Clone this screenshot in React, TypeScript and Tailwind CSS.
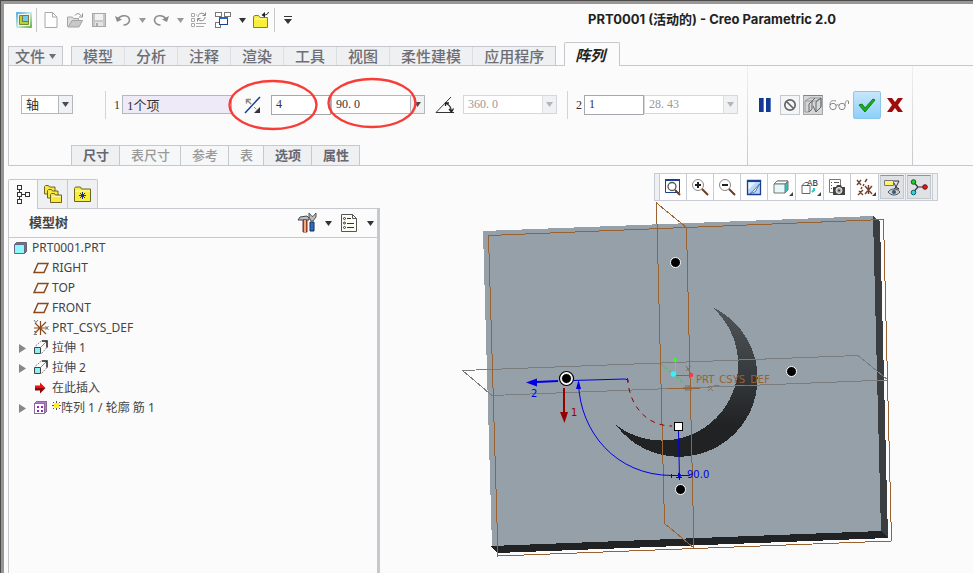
import type { ReactNode } from "react";
import clsx from "clsx";

const line = "border-[#c5c9cd]";

function Caret({ className = "fill-[#333]" }: { className?: string }) {
    return (
        <svg width="7" height="5" viewBox="0 0 7 5" className={className} aria-hidden="true">
            <path d="M0 0h7L3.5 5z" />
        </svg>
    );
}

function Icon({ size = 18, crisp = false, children }: { size?: number; crisp?: boolean; children: ReactNode }) {
    return (
        <svg
            width={size}
            height={size}
            viewBox={`0 0 ${size} ${size}`}
            fill="none"
            shapeRendering={crisp ? "crispEdges" : "auto"}
            className="shrink-0"
            aria-hidden="true"
        >
            {children}
        </svg>
    );
}

/* ---------- quick access bar ---------- */

function QuickButton({ label, small, children }: { label: string; small?: boolean; children: ReactNode }) {
    return (
        <button
            type="button"
            aria-label={label}
            className={clsx("flex h-6 items-center justify-center", small ? "w-3.5" : "w-6")}
        >
            {children}
        </button>
    );
}

function QuickAccess() {
    return (
        <div className="flex h-8 items-center pl-2">
            <QuickButton label="Creo">
                <Icon size={16}>
                    <defs>
                        <linearGradient id="app" x1="0" y1="0" x2="1" y2="1">
                            <stop offset="0" stopColor="#4aa8e8" />
                            <stop offset=".5" stopColor="#cdeadf" />
                            <stop offset="1" stopColor="#58b82c" />
                        </linearGradient>
                    </defs>
                    <rect width="16" height="16" rx="1" fill="url(#app)" />
                    <path d="M2 2h12v12H2z" fill="#f2f4e4" />
                    <path d="M3.500 3.500h9v9h-9z" fill="#b4d430" stroke="#7c8440" />
                    <path d="M6.500 3.500h6v6h-6z" fill="#70d0ec" stroke="#7c7450" />
                </Icon>
            </QuickButton>
            <div className="mr-0.5 h-6 w-px bg-[#c8c8c8]" />
            <QuickButton label="新建">
                <Icon size={16}>
                    <path d="M2 .5h7.500L14 5v10.500H2z" fill="#fff" stroke="#a8a8a8" />
                    <path d="M9.500.5V5H14" stroke="#a8a8a8" />
                </Icon>
            </QuickButton>
            <QuickButton label="打开">
                <Icon size={16}>
                    <path d="M.5 14.500V5h5l1 1.500h5V9" fill="#ddd" stroke="#a4a4a4" />
                    <path d="M1 15l4-6.500h10.500L12 15z" fill="#c8c8c8" stroke="#a4a4a4" />
                    <path d="M8 3.500c2-3 5-2 6 .5M15.500 1.500V5H12" stroke="#8c8c8c" />
                </Icon>
            </QuickButton>
            <QuickButton label="保存">
                <Icon size={16} crisp>
                    <path d="M1.500 1.500h13v13h-13z" fill="#c8c8c8" stroke="#a8a8a8" />
                    <path d="M4 2h8v6H4z" fill="#f2f2f2" />
                    <path d="M4 10h8v4H4z" fill="#e4e4e4" />
                    <path d="M5 11h2v3H5z" fill="#aaa" />
                </Icon>
            </QuickButton>
            <QuickButton label="撤消">
                <Icon size={16}>
                    <path d="M3 7c3-5 11-4 11.500 1 .3 3-3 5-6 5" stroke="#8c8c8c" strokeWidth="1.600" />
                    <path d="M0 4l2 6 5-2.500z" fill="#8c8c8c" />
                </Icon>
            </QuickButton>
            <QuickButton label="撤消列表" small>
                <Caret className="fill-[#999]" />
            </QuickButton>
            <QuickButton label="重做">
                <Icon size={16}>
                    <path d="M13 7C10 2 2 3 1.500 8c-.3 3 3 5 6 5" stroke="#8c8c8c" strokeWidth="1.600" />
                    <path d="M16 4l-2 6-5-2.500z" fill="#8c8c8c" />
                </Icon>
            </QuickButton>
            <QuickButton label="重做列表" small>
                <Caret className="fill-[#999]" />
            </QuickButton>
            <QuickButton label="重新生成">
                <Icon size={16}>
                    <path d="M.5 1.500h3v3h-3zM.5 6.500h3v3h-3zM.5 11.500h3v3h-3zM5 11.500h10M5 14.500h8M5 3h1" stroke="#aaa" />
                    <path d="M7 5c0-4 5-5 7-2M14 5c0 4-5 5-7 2M14.500.5v3h-3M6.500 9.500v-3h3" stroke="#888" />
                </Icon>
            </QuickButton>
            <QuickButton label="窗口">
                <Icon size={16} crisp>
                    <path d="M.5.5h6v4h-6zM9.500.5h6v4h-6zM.5 10.500h5v5h-5z" fill="#fff" stroke="#777" />
                    <path d="M4.500 5.500h8v7h-8z" fill="#fff" stroke="#1a3f94" />
                    <path d="M4 5h9v2H4z" fill="#2a62cc" />
                </Icon>
            </QuickButton>
            <QuickButton label="窗口列表" small>
                <Caret />
            </QuickButton>
            <QuickButton label="关闭">
                <Icon size={16}>
                    <path d="M.5 15.500V5l1-1.500h4L7 5.500h7.500v10z" fill="#f8ee3c" stroke="#8c8020" />
                    <path d="M1.500 7h12" stroke="#fffbb4" />
                    <path d="M15.500 0c-.5 2-2 3-5 3" stroke="#222" />
                    <path d="M12 0v5.500L8.500 3z" fill="#222" />
                </Icon>
            </QuickButton>
            <div className="mr-px ml-px h-6 w-px bg-[#c8c8c8]" />
            <QuickButton label="自定义">
                <Icon size={10}>
                    <path d="M1 1.500h8" stroke="#333" />
                    <path d="M1 4h8L5 9z" fill="#333" />
                </Icon>
            </QuickButton>
            <h1 className="ml-72 font-['Inter','Noto_Sans_CJK_SC',sans-serif] text-[13px] font-bold whitespace-nowrap text-[#222]">
                PRT0001 (活动的) - Creo Parametric 2.0
            </h1>
        </div>
    );
}

/* ---------- ribbon ---------- */

const mainTabs = ["模型", "分析", "注释", "渲染", "工具", "视图", "柔性建模", "应用程序"];

function RibbonTabs() {
    return (
        <div role="tablist" className="ml-1 flex h-[29px] items-end text-[15px] leading-[18px] font-medium text-[#6d6d75]">
            <button
                type="button"
                className={clsx("mr-2 flex h-[19px] items-center gap-1 border border-b-0 bg-[#eef0f2] px-1.5", line)}
            >
                文件
                <Caret className="fill-[#6d6d75]" />
            </button>
            <div className={clsx("flex h-[19px] border-t border-l", line)}>
                {mainTabs.map((tab, i) => (
                    <button
                        key={tab}
                        type="button"
                        role="tab"
                        aria-selected={false}
                        className={clsx(
                            "border-r bg-[#eef0f2] px-[11px]",
                            i === mainTabs.length - 1 ? "border-[#c5c9cd]" : "border-[#dcdfe2]",
                        )}
                    >
                        {tab}
                    </button>
                ))}
            </div>
            <button
                type="button"
                role="tab"
                aria-selected
                className={clsx(
                    "relative -mb-px ml-2 h-6 rounded-t-xs border border-b-0 bg-[#fbfbfb] pr-3.5 pl-2.5 font-bold text-[#222] italic",
                    line,
                )}
            >
                阵列
            </button>
        </div>
    );
}

type ComboProps = { label: string; value: string; className: string; disabled?: boolean; cjk?: boolean };

function Combo({ label, value, className, disabled, cjk }: ComboProps) {
    return (
        <div
            className={clsx(
                "relative h-[19px] border bg-white",
                disabled ? "border-[#d5d8da]" : "border-[#b4b8bc]",
                className,
            )}
        >
            <select
                aria-label={label}
                defaultValue={value}
                disabled={disabled}
                className={clsx(
                    "block h-full w-full appearance-none pl-1 opacity-100 outline-none",
                    cjk
                        ? "text-[13px] leading-[17px] text-[#333]"
                        : "font-['Liberation_Serif','Noto_Sans_CJK_SC',serif] text-xs leading-[17px]",
                    disabled ? "text-[#999]" : "text-[#333]",
                )}
            >
                <option>{value}</option>
            </select>
            <span
                className={clsx(
                    "pointer-events-none absolute inset-y-0 right-0 flex w-3.5 items-center justify-center border-l bg-[#f0f1f3]",
                    disabled ? "border-[#dcdee0]" : "border-[#b4b8bc]",
                )}
            >
                <Caret className={disabled ? "fill-[#b4b4bc]" : "fill-[#4a4a55]"} />
            </span>
        </div>
    );
}

function NumberBox({ id, label, value }: { id?: string; label?: string; value: string }) {
    return (
        <input
            id={id}
            aria-label={label}
            defaultValue={value}
            className="h-5 w-[60px] border border-[#a4a8ac] bg-white px-1 font-['Liberation_Serif',serif] text-xs text-[#333] outline-none"
        />
    );
}

function Ring() {
    return (
        <svg
            width="90"
            height="52"
            viewBox="0 0 90 52"
            fill="none"
            stroke="#f73d38"
            strokeWidth="2.400"
            aria-hidden="true"
        >
            <ellipse cx="45" cy="26" rx="43.500" ry="24" />
        </svg>
    );
}

function PatternControls() {
    return (
        <div className="mb-0.5 flex h-[77px] items-center pr-[9px] pl-3 text-xs text-[#333]">
            <Combo label="阵列类型" value="轴" className="w-[52px]" cjk />
            <div className="mr-2 ml-8 h-7 w-px bg-[#d2d4d6]" />
            <label htmlFor="axis" className="w-2 font-['Liberation_Serif',serif]">
                1
            </label>
            <input
                id="axis"
                defaultValue="1个项"
                className="h-[19px] w-[110px] border border-[#b4b8bc] bg-[#eeeaf8] px-1 font-['Liberation_Serif','Noto_Sans_CJK_SC',serif] text-[13px] text-[#333] outline-none"
            />
            <div className="relative ml-[10px] flex items-center">
                <button type="button" aria-label="反向" className="mr-2.5 flex h-5 w-[19px] items-center justify-center">
                    <Icon size={18}>
                        <path d="M2 17L17 1" stroke="#1a3c94" strokeWidth="1.500" />
                        <path d="M3.500 3v4.500M3 3.500h5M4 4l4 4" stroke="#8c8c80" strokeWidth="1.500" />
                        <path d="M17 11v6h-6z" fill="#333" />
                        <path d="M11 11l4 4" stroke="#555" strokeDasharray="1 1" />
                    </Icon>
                </button>
                <NumberBox label="成员数" value="4" />
                <div className="pointer-events-none absolute -top-4 -left-3.5 z-10">
                    <Ring />
                </div>
            </div>
            <div className="relative">
                <Combo label="角度" value="90. 0" className="w-[94px]" />
                <div className="pointer-events-none absolute -top-[18px] -left-1 z-10">
                    <Ring />
                </div>
            </div>
            <button type="button" aria-label="角度范围" className="ml-2 flex h-5 w-6 items-center justify-center">
                <Icon size={20}>
                    <path d="M1 17.500h18M1 17.500L16 2" stroke="#333" />
                    <path d="M11 8.500c3 1 5 3 5.500 8M10.500 11V8h3.500M14 14l2.500 3 2-3.500" stroke="#222" strokeWidth="1.300" />
                </Icon>
            </button>
            <Combo label="总角度" value="360. 0" className="ml-1.5 w-[94px]" disabled />
            <div className="mr-2 ml-2.5 h-7 w-px bg-[#d2d4d6]" />
            <label htmlFor="second" className="mr-0.5 w-1.5 font-['Liberation_Serif',serif]">
                2
            </label>
            <NumberBox id="second" value="1" />
            <Combo label="径向间距" value="28. 43" className="w-[94px]" disabled />
        </div>
    );
}

const dashTabs = [
    { label: "尺寸", on: true },
    { label: "表尺寸", on: false },
    { label: "参考", on: false },
    { label: "表", on: false },
    { label: "选项", on: true },
    { label: "属性", on: true },
];

function DashTabs() {
    return (
        <div className={clsx("ml-[62px] flex h-5 self-start border-t border-l text-[13px] leading-[19px]", line)}>
            {dashTabs.map((tab) => (
                <button
                    key={tab.label}
                    type="button"
                    disabled={!tab.on}
                    className={clsx(
                        "border-r pr-[10px] pl-[11px]",
                        line,
                        tab.on ? "bg-[#eef0f2] font-bold text-[#66666e]" : "bg-[#f6f7f8] font-medium text-[#999]",
                    )}
                >
                    {tab.label}
                </button>
            ))}
        </div>
    );
}

function RunControls() {
    return (
        <div className="flex h-[77px] items-center pr-2 pl-[9px]">
            <button type="button" aria-label="暂停" className="mr-2 flex h-5 w-[15px] items-center justify-center">
                <Icon size={14} crisp>
                    <path d="M1 0h5v14H1zM8 0h5v14H8z" fill="#123a94" />
                    <path d="M5 0h1v14H5zM12 0h1v14h-1z" fill="#5a7cc0" />
                </Icon>
            </button>
            <button
                type="button"
                aria-label="无预览"
                className="mr-[3px] flex h-5 w-5 items-center justify-center border border-[#c5c8cb] bg-[#f4f5f6]"
            >
                <Icon size={14}>
                    <circle cx="7" cy="7" r="5.200" stroke="#666" strokeWidth="1.700" />
                    <path d="M3.500 3.500l7 7" stroke="#666" strokeWidth="1.700" />
                </Icon>
            </button>
            <button
                type="button"
                aria-label="分离预览"
                className="mr-1.5 flex h-5 w-5 items-center justify-center border border-[#a4a7aa] border-t-[#808386] bg-[#d4d6d8]"
            >
                <Icon size={18}>
                    <path d="M1 5l5-3h11v9l-4 4M1 5h11M12 5l5-3M1 5v11h4" stroke="#999" />
                    <path d="M5 16V8l6-6M5 16l3-3V5M12 16V6l5-4v9l-5 5-3-6" stroke="#666" />
                </Icon>
            </button>
            <button type="button" aria-label="预览" className="mr-1 flex h-5 w-5 items-center justify-center">
                <Icon size={20}>
                    <circle cx="4" cy="11.500" r="3.200" stroke="#888" />
                    <circle cx="13" cy="11.500" r="3.200" stroke="#888" />
                    <path d="M7 10.500c1-1 2-1 3 0M1 10c0-4 2-5 6-4M16 11c0-4 1-6 3.500-5v3" stroke="#888" />
                </Icon>
            </button>
            <button
                type="button"
                aria-label="确定"
                className="mr-[5px] flex h-7 w-7 items-center justify-center rounded-xs border border-[#8cc4ea] bg-linear-to-b from-[#c8e6fa] to-[#8cd0fa]"
            >
                <Icon size={18}>
                    <path d="M1 9l3-1 3 4 8-9 2 1L7 16z" fill="#1cae1c" stroke="#0b8410" />
                </Icon>
            </button>
            <button type="button" aria-label="取消" className="flex h-5 w-[18px] items-center justify-center">
                <Icon size={16}>
                    <path d="M0 1h5l3 4 3-4h5l-5 7 5 7h-5l-3-4-3 4H0l5-7z" fill="#a00c0c" />
                </Icon>
            </button>
        </div>
    );
}

function Ribbon() {
    return (
        <div className={clsx("ml-1 flex h-[101px] border border-r-0", line)}>
            <div className="flex flex-col">
                <PatternControls />
                <DashTabs />
            </div>
            <div className="w-px bg-linear-to-b from-[#f0f0f0] to-[#c5c9cd]" />
            <RunControls />
            <div className="w-px bg-linear-to-b from-[#f0f0f0] to-[#c5c9cd]" />
        </div>
    );
}

/* ---------- model tree ---------- */

const planeIcon = (
    <Icon size={16}>
        <path d="M5 3.500h10L11 12.500H1z" stroke="#8c4a1c" strokeWidth="1.500" />
    </Icon>
);

const extrudeIcon = (
    <Icon size={16}>
        <path d="M2.500 6L9 .500M8.500 13.500l5.500-6" stroke="#888" strokeDasharray="2 1" />
        <path d="M9 1h5v6.500" stroke="#222" strokeWidth="1.500" />
        <path d="M8 7l5-5" stroke="#888" />
        <path d="M1.500 7.500h6v6h-6z" fill="#8cf0f4" stroke="#444" />
    </Icon>
);

const csysIcon = (
    <Icon size={16}>
        <path d="M7.500 1v14M2 3l11 11M13 2L2 13M1 8h12" stroke="#8c4a1c" strokeWidth="1.200" />
        <path d="M1 0l1.500 2M5 0L2.500 3M12.500 6l3 4M15.500 6l-3 4M1 11.500h3l-3 3h3" stroke="#777" />
    </Icon>
);

const arrowIcon = (
    <Icon size={16}>
        <path d="M2 5.500h5V2.500l5.500 5.500H2z" fill="#f01010" />
        <path d="M2 8h10.500L7 13.500v-3H2z" fill="#8c0808" />
    </Icon>
);

const patternIcon = (
    <Icon size={16} crisp>
        <path d="M1.500 3.500l2-2h10v10l-2 2z" fill="#b080cc" stroke="#8a6a98" />
        <path d="M1.500 3.500h10v10h-10z" fill="#fff" stroke="#8a6a98" />
        <path d="M4 6h2v2H4zM8 6h2v2H8zM4 10h2v2H4zM8 10h2v2H8z" fill="#8c28c8" />
    </Icon>
);

const treeItems = [
    { label: "RIGHT", icon: planeIcon },
    { label: "TOP", icon: planeIcon },
    { label: "FRONT", icon: planeIcon },
    { label: "PRT_CSYS_DEF", icon: csysIcon },
    { label: "拉伸 1", icon: extrudeIcon, expandable: true },
    { label: "拉伸 2", icon: extrudeIcon, expandable: true },
    { label: "在此插入", icon: arrowIcon },
    { label: "阵列 1 / 轮廓 筋 1", icon: patternIcon, expandable: true, fresh: true },
];

function ModelTree() {
    return (
        <aside className="ml-1 flex w-[372px] shrink-0 flex-col pt-[13px]">
            <div role="tablist" className="flex h-[29px]">
                <button
                    type="button"
                    role="tab"
                    aria-selected
                    aria-label="模型树"
                    className={clsx(
                        "relative -mb-px flex w-[30px] items-center justify-center rounded-tl-xs border border-b-0 bg-[#fbfbfb]",
                        line,
                    )}
                >
                    <Icon size={20} crisp>
                        <path d="M4.500.5h4v4h-4zM4.500 7.500h4v4h-4zM4.500 14.500h4v4h-4zM12.500 7.500h4v4h-4z" stroke="#333" />
                        <path d="M6.500 5v2.500M6.500 12v2.500M9 9.500h3.500" stroke="#333" />
                    </Icon>
                </button>
                <button
                    type="button"
                    role="tab"
                    aria-selected={false}
                    aria-label="文件夹浏览器"
                    className={clsx("flex w-[30px] items-center justify-center border-t border-r bg-[#eef0f2]", line)}
                >
                    <Icon size={20}>
                        <g fill="#f8e840" stroke="#6c6420">
                            <path d="M1.500 10V2.500l1-1h3l1 1.500h5.500V10z" />
                            <path d="M4.500 14V6.500l1-1h3l1 1.500H15v7z" />
                            <path d="M7.500 18.500V10.500l1-1h3l1 1.500h6v7.500z" />
                        </g>
                        <path d="M9 12.500h9" stroke="#fffbb4" />
                    </Icon>
                </button>
                <button
                    type="button"
                    role="tab"
                    aria-selected={false}
                    aria-label="收藏夹"
                    className={clsx("flex w-[30px] items-center justify-center rounded-tr-xs border-t border-r bg-[#eef0f2]", line)}
                >
                    <Icon size={18}>
                        <path d="M.5 16.500V3.500l1-1.500h5l1 2h9v12.500z" fill="#f8ee40" stroke="#6c6420" />
                        <path d="M1 6h15" stroke="#fffbb4" />
                        <path d="M8.500 7v7M5 10.500h7M6 8l5 5M11 8l-5 5" stroke="#1c2c94" />
                    </Icon>
                </button>
            </div>
            <section className={clsx("flex-1 border-t border-r-3 border-l", line)}>
                <header className={clsx("flex h-[29px] items-center border-b pr-[3px] pl-5", line)}>
                    <h2 className="flex-1 text-[13px] font-bold text-[#444]">模型树</h2>
                    <button type="button" aria-label="设置" className="flex items-center gap-2">
                        <Icon size={20}>
                            <path d="M1 7l2-3 7-1 2 2v2H1z" fill="#b8c4c4" stroke="#445" />
                            <path d="M6 7h4v12H6z" fill="#c83c1c" stroke="#733" />
                            <path d="M8 7v12" stroke="#f4d8a0" strokeWidth="1.500" />
                            <path d="M13 9h4v9h-4z" fill="#3468cc" stroke="#134" />
                            <path d="M12 0v4l2 4h2l3-4V0l-2.500 3-1.500.5z" fill="#bbb" stroke="#555" />
                        </Icon>
                        <Caret />
                    </button>
                    <button type="button" aria-label="显示" className="ml-[7px] flex items-center gap-2">
                        <Icon size={20}>
                            <path d="M2.500 1.500h11l4 4v13h-15z" fill="#fdfdf6" stroke="#555" />
                            <path d="M13.500 1.500v4h4" stroke="#555" />
                            <circle cx="5.500" cy="5.500" r="1" stroke="#333" />
                            <circle cx="5.500" cy="10" r="1" stroke="#333" />
                            <circle cx="5.500" cy="14.500" r="1" stroke="#333" />
                            <path d="M8 5.500h4M8 10.500h7M8 14.500h7" stroke="#333" />
                        </Icon>
                        <Caret />
                    </button>
                </header>
                <ul role="tree" className="text-xs text-[#444]">
                    <li role="treeitem" aria-selected={false} className="flex h-5 items-center gap-[3px] pl-1">
                        <Icon size={16}>
                            <path d="M1.500 4.500l2-2h10v9l-2 2z" fill="#3c8c94" stroke="#666" />
                            <path d="M1.500 4.500h10v9h-10z" fill="#8cf8fc" stroke="#668" />
                        </Icon>
                        PRT0001.PRT
                    </li>
                    {treeItems.map((item) => (
                        <li key={item.label} role="treeitem" aria-selected={false} className="flex h-5 items-center pl-2.5">
                            <span className="w-3.5">
                                {item.expandable && (
                                    <button type="button" aria-label={`展开 ${item.label}`} className="block">
                                        <svg width="7" height="9" viewBox="0 0 7 9" aria-hidden="true">
                                            <path d="M0 0l7 4.500L0 9z" fill="#888" />
                                        </svg>
                                    </button>
                                )}
                            </span>
                            {item.icon}
                            <span className="ml-[3px] flex items-center whitespace-nowrap">
                                {item.fresh && (
                                    <svg width="9" height="9" viewBox="0 0 9 9" className="mb-1.5" aria-hidden="true">
                                        <path d="M4.500 0v9M0 4.500h9M1 1l7 7M8 1L1 8" stroke="#554" />
                                        <path d="M2 2h5v5H2z" fill="#ffee20" />
                                    </svg>
                                )}
                                {item.label}
                            </span>
                        </li>
                    ))}
                </ul>
            </section>
        </aside>
    );
}

/* ---------- graphics area ---------- */

type ViewTool = { label: string; menu?: boolean; active?: boolean; icon: ReactNode };

const viewTools: ViewTool[] = [
    {
        label: "重新调整",
        icon: (
            <>
                <path d="M1.500 1.500h14v13h-14z" fill="#fff" stroke="#1a3f94" />
                <path d="M1 2h15" stroke="#1a3f94" strokeWidth="2" />
                <circle cx="8" cy="8.500" r="4" fill="#fff" stroke="#555" strokeWidth="1.300" />
                <path d="M11 12l5 5" stroke="#6a3c20" strokeWidth="2" />
            </>
        ),
    },
    {
        label: "放大",
        icon: (
            <>
                <circle cx="7" cy="7" r="5.500" fill="#fff" stroke="#888" />
                <path d="M7 4v6M4 7h6" stroke="#222" strokeWidth="2" />
                <path d="M11 11l6 6" stroke="#6a3c20" strokeWidth="2" />
            </>
        ),
    },
    {
        label: "缩小",
        icon: (
            <>
                <circle cx="7" cy="7" r="5.500" fill="#fff" stroke="#888" />
                <path d="M4 7h6" stroke="#222" strokeWidth="2" />
                <path d="M11 11l6 6" stroke="#6a3c20" strokeWidth="2" />
            </>
        ),
    },
    {
        label: "重画",
        icon: (
            <>
                <path d="M2.500 2.500h13v14h-13z" fill="#b8d8f8" stroke="#1a3f94" strokeWidth="1.300" />
                <path d="M2 3h14" stroke="#1a3f94" strokeWidth="2" />
                <path d="M3.500 4.500h7l-7 7z" fill="#e8f4ff" />
                <path d="M14.500 6L9 12l-4.500 4 6-2.500z" fill="#fff" stroke="#345c9c" strokeWidth=".8" />
            </>
        ),
    },
    {
        label: "显示样式",
        menu: true,
        icon: (
            <>
                <path d="M1 6l3-3h11v9l-3 3z" fill="#2c9494" stroke="#777" />
                <path d="M1 6h11l3-3H4z" fill="#fff" stroke="#777" />
                <path d="M1 6h11v9H1z" fill="#e4fafa" stroke="#777" />
                <path d="M12.500 6.500v8l2-2v-8z" fill="#2cc4c4" />
            </>
        ),
    },
    {
        label: "已命名视图",
        menu: true,
        icon: (
            <>
                <path d="M1 7.500h8v8H1zM1 7.500l3-3h3" fill="#fff" stroke="#666" />
                <path d="M11 14l2-2v-2" stroke="#2cc4c4" strokeWidth="2" />
                <text x="6" y="8" fontSize="9" fontFamily="Liberation Mono, monospace" fill="#222">
                    AB
                </text>
            </>
        ),
    },
    {
        label: "视图管理器",
        icon: (
            <>
                <path d="M1.500 1.500h11v13h-11z" fill="#fff" stroke="#777" />
                <path d="M3 4.500h1M6 4.500h5M3 7.500h1M3 10.500h1" stroke="#555" />
                <path d="M5 9h3l1-2h4l1 2h3v8H5z" fill="#444" />
                <circle cx="11" cy="12.500" r="3" fill="#aaa" stroke="#eee" />
                <circle cx="11" cy="12.500" r="1" fill="#333" />
            </>
        ),
    },
    {
        label: "基准显示过滤器",
        menu: true,
        icon: (
            <path
                d="M1 2l4 5M5 2L1 7M11 1L9 4M8 6l-1 2M6 9l-1 2M9 8l7 8M16 8l-7 8M12.500 7v9M3 13l4 4M7 12l-5 5"
                stroke="#70402a"
                strokeWidth="1.400"
            />
        ),
    },
    {
        label: "注释显示",
        active: true,
        icon: (
            <>
                <path d="M1.500 2.500h9v5h-9z" fill="#fcf46c" stroke="#777" />
                <path d="M11 3h5l-1 2-2 4-2 2h5l-3-2-2-4" stroke="#333" />
                <path d="M5 14c3-4 9-4 12 0-3 4-9 4-12 0z" fill="#c4ccd4" stroke="#556" />
                <circle cx="11" cy="14" r="2" fill="#345c7c" />
            </>
        ),
    },
    {
        label: "旋转中心",
        active: true,
        icon: (
            <>
                <path d="M3.500 4L8 9l-4.500 5M8 9h7" stroke="#333" strokeWidth="1.200" />
                <circle cx="3.500" cy="4" r="2.300" fill="#18d428" stroke="#145c18" />
                <circle cx="3.500" cy="14.500" r="2.300" fill="#28d8e4" stroke="#145c64" />
                <circle cx="15" cy="9" r="2.300" fill="#e41818" stroke="#701010" />
            </>
        ),
    },
];

function ViewToolbar() {
    return (
        <div role="toolbar" className="mt-[7px] mr-[35px] flex h-7 self-end border border-[#c8ccd4] bg-[#eef0f3]">
            <div className="w-1" />
            {viewTools.map((tool) => (
                <button
                    key={tool.label}
                    type="button"
                    aria-label={tool.label}
                    aria-pressed={tool.active}
                    className={clsx(
                        "relative flex items-center justify-center border-l border-[#c8ccd4]",
                        tool.menu ? "w-7" : "w-[27px]",
                        tool.active ? "p-px" : "bg-white",
                    )}
                >
                    <span
                        className={clsx(
                            "flex h-full w-full items-center justify-center",
                            tool.active && "border border-[#c4c8cc] border-t-[#909498] bg-[#dfe2e5]",
                        )}
                    >
                        <Icon>{tool.icon}</Icon>
                    </span>
                    {tool.menu && (
                        <svg width="4" height="4" className="absolute right-0.5 bottom-1" aria-hidden="true">
                            <path d="M4 0v4H0z" fill="#444" />
                        </svg>
                    )}
                </button>
            ))}
            <div className="w-[5px] border-l border-[#c8ccd4]" />
        </div>
    );
}

const handles = [
    [675.5, 262.5],
    [791.5, 371.5],
    [680.5, 489.5],
    [566.5, 378.5],
];

function ModelView() {
    return (
        <svg
            role="img"
            aria-label="PRT0001"
            className="block h-[372px] w-full"
            viewBox="380 201 593 372"
            preserveAspectRatio="xMinYMin meet"
            fill="none"
        >
            <defs>
                <linearGradient id="rib" x1="0" y1="0" x2="0" y2="1">
                    <stop offset="0" stopColor="#50565a" />
                    <stop offset=".45" stopColor="#363a3c" />
                    <stop offset=".8" stopColor="#202223" />
                </linearGradient>
            </defs>

            {/* plate */}
            <g shapeRendering="crispEdges">
                <path d="M483 231L873 216L881 532L492 547z" fill="#95a0a8" />
                <path d="M873 216L880 221L888 538L881 532z" fill="#3a3e40" />
                <path d="M491 546L881 531L888 538L497 553z" fill="#202224" />
                <path d="M712 307A78.500 78.500 0 1 1 616 425A76.100 76.100 0 0 0 712 307z" fill="url(#rib)" />
            </g>

            {/* datum planes */}
            <g shapeRendering="crispEdges">
                <path d="M462.500 370.500L858 355.500L888 380L492 395.500z" stroke="#7c7c7c" />
                <path d="M488.500 235.500L883.500 219.500L891.500 541L498 556z" stroke="#9a6230" />
                <path d="M656.500 203L686.500 227.500L694 548L664.500 523.500z" stroke="#9a6230" />
                <path d="M668 388.500h32" stroke="#9a6230" />
            </g>

            {/* coordinate system */}
            <path d="M661 364l23 19" stroke="#30c840" strokeDasharray="3 2" />
            <path d="M686 366l5 8M691 366l-5 5M685 386h5l-5 4h7M708 386l5 5M713 386l-5 5" stroke="#80705c" />
            <path d="M675.500 360v14" stroke="#3cf43c" />
            <path d="M674 375.500h17" stroke="#f43434" />
            <circle cx="675" cy="360" r="2" fill="#3cf43c" />
            <circle cx="691" cy="375" r="2.200" fill="#fc3838" />
            <circle cx="673.500" cy="374" r="2.800" fill="#38f0f8" />
            <text x="696" y="383" fontSize="10" fontFamily="DejaVu Sans, sans-serif" fill="#9a6230">
                PRT_CSYS_DEF
            </text>

            {/* pattern directions */}
            <g stroke="#0000e8">
                <path d="M537 382l21-1" strokeWidth="2" />
                <path d="M572 380.500l53-1.500 3 1v2" />
                <path d="M578.500 383C580 432 616 475.500 672 475.500h18" />
                <path d="M678.500 431l1 49M671.500 474v4M676 477.500h6" />
            </g>
            <path d="M526 382.500l11-4v8zM578.500 380l2.500 9h-5zM678 472.500l4 3-4 3z" fill="#0000e8" />
            <path d="M564 388v24" stroke="#980000" strokeWidth="2" />
            <path d="M560 412h8l-3.500 11z" fill="#980000" />
            <path d="M627.500 378C629 405 646 426 672 426" stroke="#980000" strokeDasharray="5 5" />
            <g fontSize="10" fontFamily="DejaVu Sans, sans-serif">
                <text x="531" y="397" fill="#0000e8">
                    2
                </text>
                <text x="571" y="416" fill="#980000">
                    1
                </text>
                <text x="687" y="478" fill="#0000e8">
                    90.0
                </text>
            </g>

            {/* members */}
            <circle cx="566.500" cy="378.500" r="7" fill="#fff" stroke="#000" strokeWidth="1.200" />
            {handles.map(([x, y]) => (
                <circle key={x} cx={x} cy={y} r="5" fill="#000" stroke="#fff" />
            ))}
            <path d="M674.500 422.500h8v8h-8z" fill="#fff" stroke="#000" shapeRendering="crispEdges" />
        </svg>
    );
}

export default function App() {
    return (
        <div className="flex min-h-screen flex-col border-t border-l border-[#4c4c4c] font-['Noto_Sans','Noto_Sans_CJK_SC',sans-serif]">
            <div className="flex flex-1 flex-col overflow-hidden border-t-3 border-l-3 border-[#9a9694] bg-[#fbfbfb]">
                <QuickAccess />
                <RibbonTabs />
                <Ribbon />
                <div className="flex flex-1">
                    <ModelTree />
                    <main className="flex min-w-0 flex-1 flex-col">
                        <ViewToolbar />
                        <ModelView />
                    </main>
                </div>
            </div>
        </div>
    );
}
